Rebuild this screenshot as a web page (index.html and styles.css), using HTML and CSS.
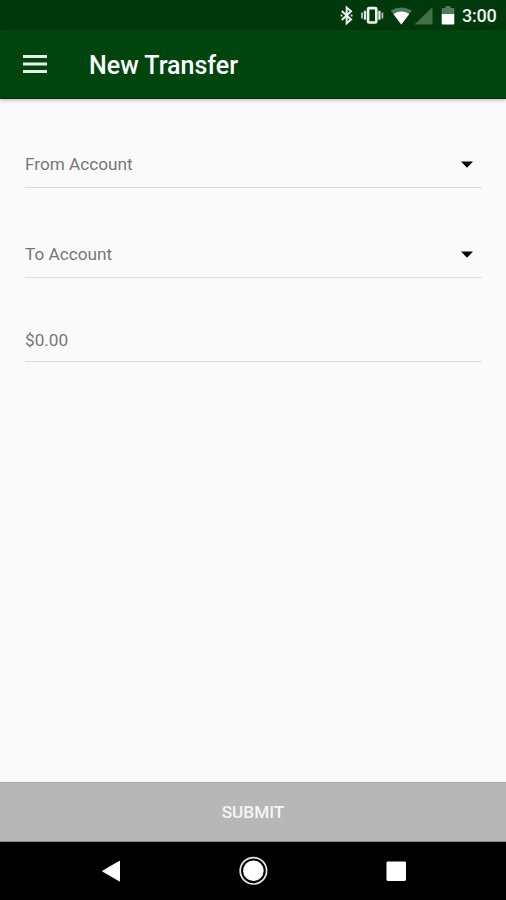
FILE: index.html
```html
<!DOCTYPE html>
<html lang="en">
<head>
<meta charset="utf-8">
<title>New Transfer</title>
<link rel="stylesheet" href="styles.css">
</head>
<body>
<div class="screen">
  <div class="status-bar">
    <svg class="status-icons" width="120" height="30" viewBox="0 0 120 30" aria-hidden="true">
      <path d="M1.8 10.9L11 19.5L6.7 23.2V7.6L11 11.3L1.8 19.9" fill="none" stroke="#eef2ee" stroke-width="2"/>
      <path d="M.6 14.5h1.9v1.9H.6zM10.6 14.5h1.9v1.9h-1.9z" fill="#cbd6cd"/>
      <rect x="28.1" y="8.1" width="8.2" height="14.4" rx="1" fill="none" stroke="#eef2ee" stroke-width="2.6"/>
      <path d="M25 10.8v9M39.4 10.8v9" stroke="#dfe7e0" stroke-width="2.3"/>
      <path d="M22 12.5v6M42.4 12.5v6" stroke="#b4c5b7" stroke-width="1.8"/>
      <path d="M50.8 10.6Q61.3 4.2 71.8 10.6L61.3 24.5Z" fill="#527b5a"/>
      <path d="M53.3 13.9Q61.3 9 69.3 13.9L61.3 24.5Z" fill="#fff"/>
      <path d="M92.5 7v17.5H74.5Z" fill="#447049"/>
      <path d="M105.5 6h5v2h3.8v6h-12.6V8h3.8z" fill="#527b5a"/>
      <path d="M101.7 14h12.6v9.5q0 1-1 1h-10.6q-1 0-1-1z" fill="#fff"/>
    </svg>
    <span class="clock">3:00</span>
  </div>
  <header class="app-bar">
    <svg class="menu-icon" width="24" height="20" viewBox="0 0 24 20" aria-label="Menu">
      <path d="M0 2.5h24M0 10h24M0 17.5h24" stroke="#e7eee8" stroke-width="2.8"/>
    </svg>
    <h1 class="title">New Transfer</h1>
  </header>
  <main class="form">
    <div class="field select-field">
      <span>From Account</span>
      <svg class="caret" width="12" height="7" viewBox="0 0 12 7"><path d="M0 .5h12L6 6.8z"/></svg>
    </div>
    <div class="field select-field">
      <span>To Account</span>
      <svg class="caret" width="12" height="7" viewBox="0 0 12 7"><path d="M0 .5h12L6 6.8z"/></svg>
    </div>
    <div class="field amount-field"><span>$0.00</span></div>
  </main>
  <button class="submit" type="button">SUBMIT</button>
  <nav class="nav-bar">
    <svg width="506" height="58" viewBox="0 0 506 58" aria-hidden="true">
      <path d="M120 19.4v19.4q0 .9-.9.4L102.7 29.8q-1-.7 0-1.4l16.4-9.4q.9-.5.9.4z" fill="#fff"/>
      <circle cx="253.4" cy="28.8" r="13.2" fill="none" stroke="#e8e8e8" stroke-width="1.7"/>
      <circle cx="253.4" cy="28.8" r="10.3" fill="#fff"/>
      <rect x="386.5" y="19.4" width="19.5" height="19.5" rx="1.3" fill="#fff"/>
    </svg>
  </nav>
</div>
</body>
</html>
```

FILE: styles.css
```css
* {
  box-sizing: border-box;
}

body {
  margin: 0;
  font-family: Roboto, "Liberation Sans", sans-serif;
}

.screen {
  display: flex;
  flex-direction: column;
  width: 506px;
  height: 900px;
  background: #fafafa;
  overflow: hidden;
}

.status-bar {
  display: flex;
  align-items: center;
  justify-content: flex-end;
  flex: none;
  height: 30px;
  padding-right: 9px;
  background: #00390b;
}

.status-icons {
  flex: none;
  margin-right: 2px;
}

.clock {
  width: 35px;
  padding-top: 2px;
  color: #eef2ee;
  font-size: 18px;
  font-weight: 500;
  line-height: 28px;
  letter-spacing: -0.2px;
  white-space: nowrap;
}

.app-bar {
  display: flex;
  align-items: center;
  flex: none;
  height: 69px;
  padding: 0 23px;
  background: #00450d;
  border-bottom: 1px solid #00310a;
  box-shadow: 0 1px 4px rgba(0, 0, 0, 0.3);
}

.title {
  margin: 4px 0 0 42px;
  color: #fff;
  font-size: 25px;
  font-weight: 500;
  line-height: 32px;
}

.form {
  flex: 1;
  padding: 41px 24px 0 25px;
}

.field {
  display: flex;
  align-items: center;
  justify-content: space-between;
  height: 48px;
  border-bottom: 1px solid #dedede;
  color: #777;
  font-size: 17.2px;
  line-height: 20px;
}

.select-field {
  margin-bottom: 42px;
  padding-right: 9px;
}

.amount-field {
  height: 42px;
  padding-bottom: 2px;
}

.caret {
  margin-top: 2px;
  fill: #000;
}

.submit {
  flex: none;
  height: 60px;
  padding: 0;
  border: 0;
  border-top: 1px solid #acacac;
  border-bottom: 1px solid #888;
  background: #b7b7b7;
  color: #f5f5f5;
  font: 500 17.2px/58px Roboto, "Liberation Sans", sans-serif;
}

.nav-bar {
  flex: none;
  height: 58px;
  background: #000;
}

.nav-bar svg {
  display: block;
}
```
